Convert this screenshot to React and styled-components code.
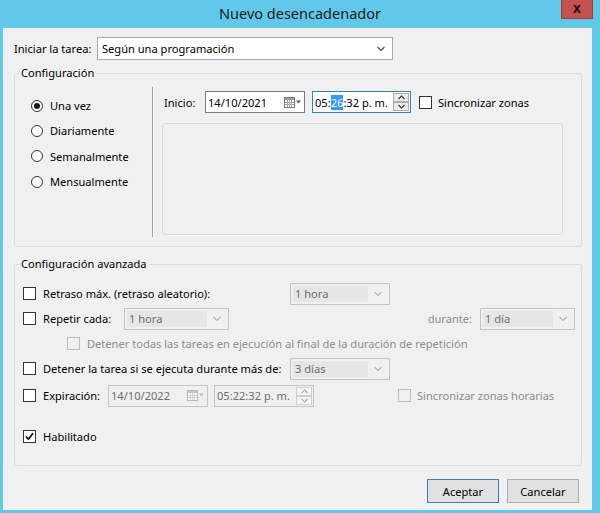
import React from "react"
import styled, { createGlobalStyle } from "styled-components"

const GlobalStyle = createGlobalStyle`
  html, body {
    margin: 0;
    padding: 0;
    background: #62c8e9;
  }
  body {
    font-family: "Noto Sans", "Liberation Sans", sans-serif;
    font-size: 11.1px;
    color: #000;
  }
`

const Window = styled.div`
  width: 600px;
  height: 513px;
  background: #62c8e9;
  display: flex;
  flex-direction: column;
  box-sizing: border-box;
`

const TitleBar = styled.div`
  height: 28px;
  display: grid;
  grid-template-columns: 1fr auto 1fr;
  align-items: start;
`

const Title = styled.div`
  grid-column: 2;
  font-size: 14.5px;
  line-height: 27px;
  color: #1b1b1b;
`

const CloseButton = styled.div`
  grid-column: 3;
  justify-self: end;
  margin-right: 7px;
  width: 32px;
  height: 19px;
  box-sizing: border-box;
  background: #c75050;
  border: 1px solid #a23c3c;
  border-top: none;
  display: flex;
  align-items: center;
  justify-content: center;
  padding-bottom: 2px;
  font-family: "Liberation Sans", sans-serif;
  font-weight: bold;
  font-size: 14px;
  color: #111;
`

const Client = styled.div`
  flex: 1;
  margin: 0 8px 3px 3px;
  background: #f0f0f0;
  padding: 9px 10px 0 11px;
  display: flex;
  flex-direction: column;
`

const TopRow = styled.div`
  display: flex;
  align-items: center;
  height: 23px;
`

const Label = styled.span`
  width: ${({ w }) => (w ? `${w}px` : "auto")};
  flex-shrink: 0;
  color: ${({ disabled }) => (disabled ? "#8d8d8d" : "#000")};
  white-space: nowrap;
  margin-left: ${({ ml }) => (ml ? `${ml}px` : "0")};
  margin-right: ${({ mr }) => (mr ? `${mr}px` : "0")};
`

const PushedLabel = styled(Label)`
  margin-left: auto;
`

const Select = styled.div`
  width: ${({ w }) => w}px;
  height: ${({ h }) => h || 22}px;
  box-sizing: border-box;
  background: ${({ disabled }) => (disabled ? "#f0f0f0" : "#fff")};
  border: 1px solid ${({ disabled }) => (disabled ? "#c4c4c4" : "#a9a9a9")};
  display: flex;
  align-items: center;
  padding: 2px 7px 2px 2px;
  flex-shrink: 0;
`

const SelectText = styled.div`
  flex: 1;
  align-self: stretch;
  display: flex;
  align-items: center;
  padding-left: 2px;
  margin-right: ${({ disabled }) => (disabled ? "6px" : "0")};
  background: ${({ disabled }) => (disabled ? "#e6e6e6" : "transparent")};
  color: ${({ disabled }) => (disabled ? "#6d6d6d" : "#000")};
  white-space: nowrap;
`

const Chevron = ({ disabled }) => (
  <svg width="8" height="6" viewBox="0 0 8 6">
    <polyline
      points="0.5,1 4,4.5 7.5,1"
      fill="none"
      stroke={disabled ? "#b4b4b4" : "#444"}
      strokeWidth="1.2"
    />
  </svg>
)

const Combo = ({ w, h, value, disabled }) => (
  <Select w={w} h={h} disabled={disabled}>
    <SelectText disabled={disabled}>{value}</SelectText>
    <Chevron disabled={disabled} />
  </Select>
)

const GroupBox = styled.fieldset`
  margin: ${({ mt }) => mt}px 0 0 0;
  padding: 0;
  width: 568px;
  height: ${({ h }) => h}px;
  box-sizing: border-box;
  border: 1px solid #d5dfe5;
  border-radius: 3px;
  min-width: 0;
`

const Legend = styled.legend`
  margin-left: 4px;
  padding: 0 2px;
  line-height: 16px;
`

const ScheduleBody = styled.div`
  display: flex;
  height: calc(100% - 16px);
`

const RadioColumn = styled.div`
  width: 121px;
  padding: 12px 0 0 16px;
  display: flex;
  flex-direction: column;
`

const RadioRow = styled.label`
  display: flex;
  align-items: center;
  height: 25.3px;
  gap: 7px;
`

const RadioCircle = styled.span`
  width: 12px;
  height: 12px;
  box-sizing: border-box;
  border-radius: 50%;
  border: 1px solid #333;
  background: #fff;
  display: flex;
  align-items: center;
  justify-content: center;
  &::after {
    content: "";
    width: 6px;
    height: 6px;
    border-radius: 50%;
    background: #1a1a1a;
    display: ${({ checked }) => (checked ? "block" : "none")};
  }
`

const Separator = styled.div`
  width: 0;
  margin-top: 6px;
  height: 150px;
  border-left: 1px solid #a0a0a0;
  border-right: 1px solid #fff;
`

const DetailColumn = styled.div`
  flex: 1;
  padding: 10px 0 0 8px;
  display: flex;
  flex-direction: column;
`

const FieldRow = styled.div`
  display: flex;
  align-items: center;
  height: 22px;
`

const Picker = styled.div`
  width: ${({ w }) => w}px;
  height: 22px;
  box-sizing: border-box;
  background: ${({ disabled }) => (disabled ? "#f0f0f0" : "#fff")};
  border: 1px solid
    ${({ disabled, focused }) =>
      disabled ? "#c4c4c4" : focused ? "#3c7fb1" : "#7a7a7a"};
  display: flex;
  align-items: center;
  padding: 0 2px 0 2px;
  flex-shrink: 0;
  margin-left: ${({ ml }) => (ml ? `${ml}px` : "0")};
  color: ${({ disabled }) => (disabled ? "#6d6d6d" : "#000")};
`

const PickerText = styled.span`
  flex: 1;
  white-space: nowrap;
`

const Highlight = styled.span`
  background: #3399ff;
  color: #fff;
`

const CalendarIcon = ({ disabled }) => (
  <svg width="18" height="11" viewBox="0 0 18 11">
    <rect x="0.5" y="0.5" width="10" height="10" fill="#fff" stroke={disabled ? "#b8b8b8" : "#7a7a7a"} />
    <rect x="1" y="1" width="9" height="2" fill={disabled ? "#c8c8c8" : "#9a9a9a"} />
    {[3, 5, 7].map(x => (
      <line key={"v" + x} x1={x + 0.5} y1="3" x2={x + 0.5} y2="10" stroke={disabled ? "#d0d0d0" : "#a8a8a8"} />
    ))}
    {[5, 7].map(y => (
      <line key={"h" + y} x1="1" y1={y + 0.5} x2="10" y2={y + 0.5} stroke={disabled ? "#d0d0d0" : "#a8a8a8"} />
    ))}
    <polygon points="12,3.5 17,3.5 14.5,6.5" fill={disabled ? "#c0c0c0" : "#4a5d7e"} />
  </svg>
)

const DatePicker = ({ value, disabled, w = 100, ml }) => (
  <Picker w={w} disabled={disabled} ml={ml}>
    <PickerText>{value}</PickerText>
    <CalendarIcon disabled={disabled} />
  </Picker>
)

const Spinner = styled.div`
  display: flex;
  flex-direction: column;
  margin-right: -1px;
`

const SpinButton = styled.div`
  width: 16px;
  height: 9px;
  box-sizing: border-box;
  border: 1px solid ${({ disabled }) => (disabled ? "#cfcfcf" : "#acacac")};
  background: ${({ disabled }) => (disabled ? "#f4f4f4" : "#ececec")};
  display: flex;
  align-items: center;
  justify-content: center;
`

const SpinArrow = ({ up, disabled }) => (
  <svg width="7" height="5" viewBox="0 0 7 5">
    <polyline
      points={up ? "0.5,4 3.5,1 6.5,4" : "0.5,1 3.5,4 6.5,1"}
      fill="none"
      stroke={disabled ? "#b0b0b0" : "#333"}
      strokeWidth="1.1"
    />
  </svg>
)

const TimePicker = ({ children, disabled, focused, w = 99, ml }) => (
  <Picker w={w} disabled={disabled} focused={focused} ml={ml}>
    <PickerText>{children}</PickerText>
    <Spinner>
      <SpinButton disabled={disabled}>
        <SpinArrow up disabled={disabled} />
      </SpinButton>
      <SpinButton disabled={disabled}>
        <SpinArrow disabled={disabled} />
      </SpinButton>
    </Spinner>
  </Picker>
)

const Box = styled.span`
  width: 13px;
  height: 13px;
  box-sizing: border-box;
  flex-shrink: 0;
  border: 1px solid ${({ disabled }) => (disabled ? "#bcbcbc" : "#333")};
  background: ${({ disabled }) => (disabled ? "#f0f0f0" : "#fff")};
  display: flex;
  align-items: center;
  justify-content: center;
  margin-left: ${({ ml }) => (ml ? `${ml}px` : "0")};
  margin-right: ${({ mr }) => (mr ? `${mr}px` : "0")};
`

const CheckBox = ({ checked, disabled, ml, mr = 7 }) => (
  <Box disabled={disabled} ml={ml} mr={mr}>
    {checked && (
      <svg width="9" height="9" viewBox="0 0 9 9">
        <polyline points="1,4.5 3.5,7.2 8,1.2" fill="none" stroke="#111" strokeWidth="1.8" />
      </svg>
    )}
  </Box>
)

const InnerPanel = styled.div`
  width: 401px;
  height: 112px;
  box-sizing: border-box;
  margin-top: 10px;
  border: 1px solid #dadada;
  border-radius: 3px;
  background: #f0f0f0;
`

const AdvancedBody = styled.div`
  padding: 9px 6px 0 8px;
  display: flex;
  flex-direction: column;
`

const OptionRow = styled.div`
  display: flex;
  align-items: center;
  height: 25px;
  margin-top: ${({ mt }) => (mt ? `${mt}px` : "0")};
  padding-left: ${({ indent }) => (indent ? `${indent}px` : "0")};
`

const Lead = styled.div`
  display: flex;
  align-items: center;
  width: ${({ w }) => w}px;
  flex-shrink: 0;
`

const Footer = styled.div`
  display: flex;
  justify-content: flex-end;
  gap: 8px;
  margin-top: 13px;
  padding-right: 3px;
`

const Button = styled.button`
  width: 72px;
  height: 24px;
  box-sizing: border-box;
  font-family: inherit;
  font-size: inherit;
  color: #000;
  background: #e1e1e1;
  border: 1px solid ${({ primary }) => (primary ? "#3c7fb1" : "#adadad")};
  padding: 0;
`

export default function App() {
  return (
    <>
      <GlobalStyle />
      <Window>
        <TitleBar>
          <Title>Nuevo desencadenador</Title>
          <CloseButton>x</CloseButton>
        </TitleBar>
        <Client>
          <TopRow>
            <Label w={83}>Iniciar la tarea:</Label>
            <Combo w={296} h={23} value="Según una programación" />
          </TopRow>

          <GroupBox mt={5} h={182}>
            <Legend>Configuración</Legend>
            <ScheduleBody>
              <RadioColumn>
                <RadioRow>
                  <RadioCircle checked />
                  Una vez
                </RadioRow>
                <RadioRow>
                  <RadioCircle />
                  Diariamente
                </RadioRow>
                <RadioRow>
                  <RadioCircle />
                  Semanalmente
                </RadioRow>
                <RadioRow>
                  <RadioCircle />
                  Mensualmente
                </RadioRow>
              </RadioColumn>
              <Separator />
              <DetailColumn>
                <FieldRow>
                  <Label w={41} ml={2}>Inicio:</Label>
                  <DatePicker value="14/10/2021" />
                  <TimePicker focused ml={7}>
                    05:<Highlight>26</Highlight>:32 p. m.
                  </TimePicker>
                  <CheckBox ml={8} mr={6} />
                  <Label>Sincronizar zonas</Label>
                </FieldRow>
                <InnerPanel />
              </DetailColumn>
            </ScheduleBody>
          </GroupBox>

          <GroupBox mt={9} h={210}>
            <Legend>Configuración avanzada</Legend>
            <AdvancedBody>
              <OptionRow>
                <Lead w={267}>
                  <CheckBox />
                  <Label>Retraso máx. (retraso aleatorio):</Label>
                </Lead>
                <Combo w={100} value="1 hora" disabled />
              </OptionRow>
              <OptionRow>
                <Lead w={101}>
                  <CheckBox />
                  <Label>Repetir cada:</Label>
                </Lead>
                <Combo w={105} value="1 hora" disabled />
                <PushedLabel disabled mr={8}>
                  durante:
                </PushedLabel>
                <Combo w={95} value="1 día" disabled />
              </OptionRow>
              <OptionRow indent={44}>
                <CheckBox disabled />
                <Label disabled>
                  Detener todas las tareas en ejecución al final de la duración de repetición
                </Label>
              </OptionRow>
              <OptionRow>
                <Lead w={267}>
                  <CheckBox />
                  <Label>Detener la tarea si se ejecuta durante más de:</Label>
                </Lead>
                <Combo w={100} value="3 días" disabled />
              </OptionRow>
              <OptionRow mt={2}>
                <Lead w={85}>
                  <CheckBox />
                  <Label>Expiración:</Label>
                </Lead>
                <DatePicker value="14/10/2022" disabled />
                <TimePicker disabled w={100} ml={6}>
                  05:22:32 p. m.
                </TimePicker>
                <CheckBox disabled ml={84} mr={6} />
                <Label disabled>Sincronizar zonas horarias</Label>
              </OptionRow>
              <OptionRow mt={16}>
                <CheckBox checked />
                <Label>Habilitado</Label>
              </OptionRow>
            </AdvancedBody>
          </GroupBox>

          <Footer>
            <Button primary>Aceptar</Button>
            <Button>Cancelar</Button>
          </Footer>
        </Client>
      </Window>
    </>
  )
}
